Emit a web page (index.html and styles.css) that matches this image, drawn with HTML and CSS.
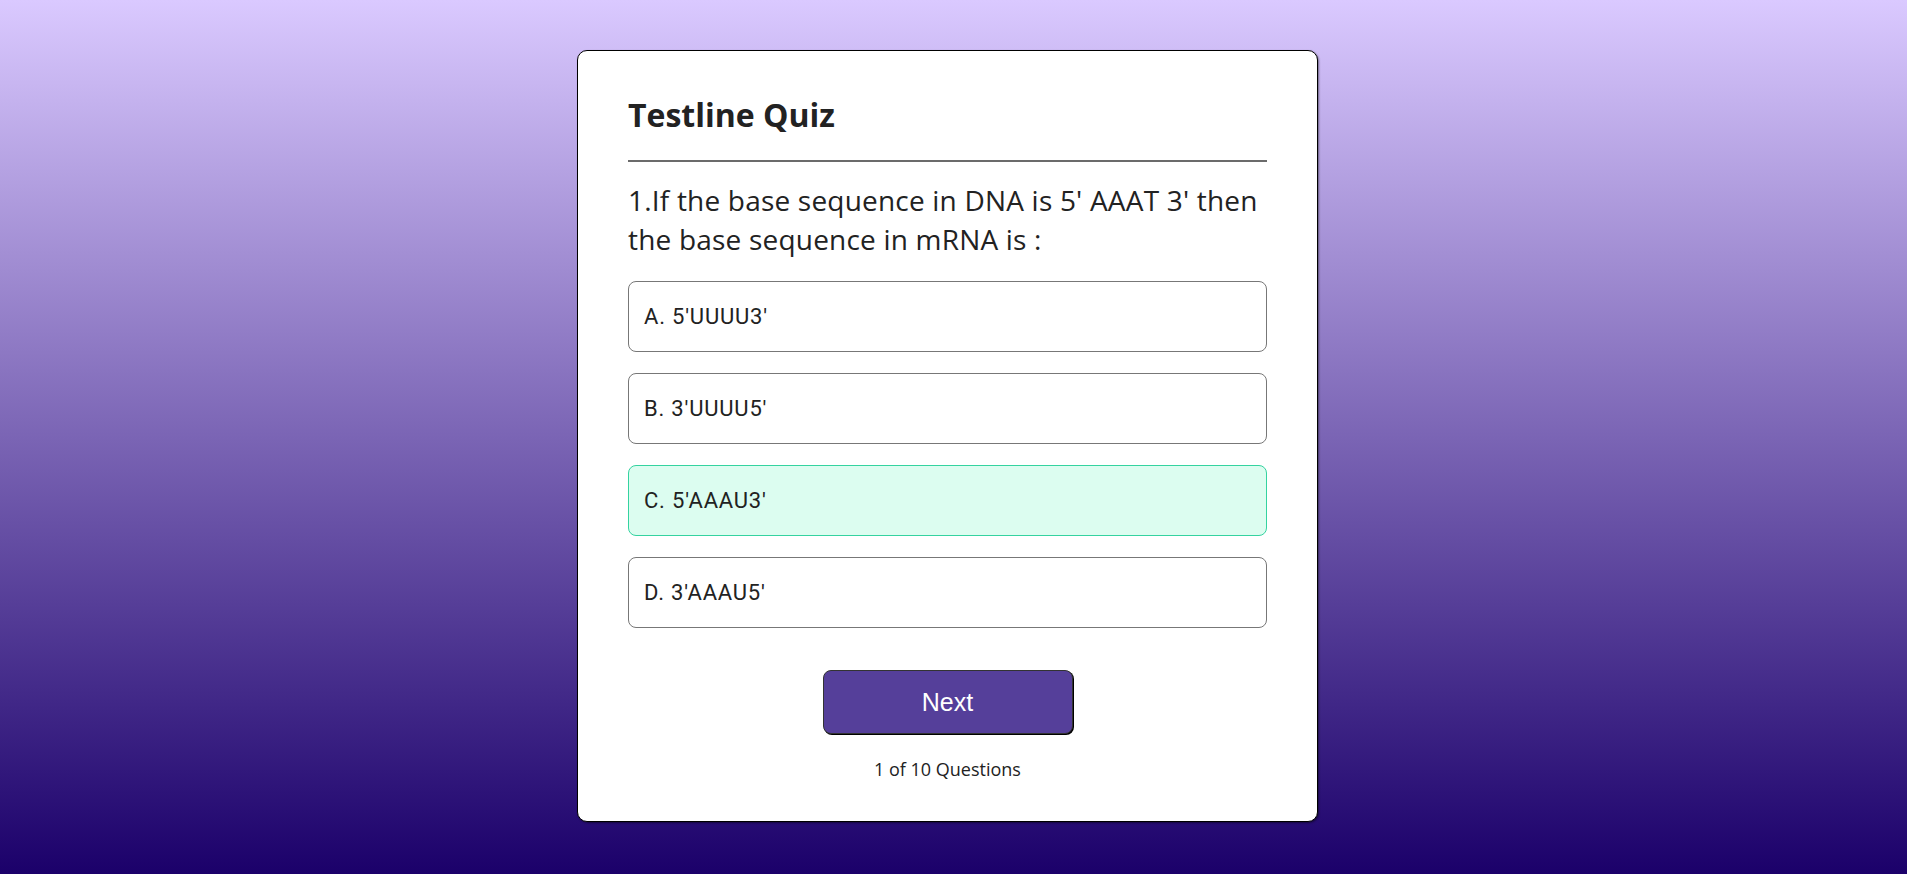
FILE: index.html
```html
<!DOCTYPE html>
<html lang="en">
<head>
<meta charset="utf-8">
<title>Testline Quiz</title>
<link rel="stylesheet" href="styles.css">
</head>
<body>
<main class="page">
  <section class="card">
    <h1 class="title">Testline Quiz</h1>
    <hr class="divider">
    <h2 class="question">1.If the base sequence in DNA is 5' AAAT 3' then the base sequence in mRNA is :</h2>
    <ul class="options">
      <li><button class="option">A. 5'UUUU3'</button></li>
      <li><button class="option">B. 3'UUUU5'</button></li>
      <li><button class="option option--correct">C. 5'AAAU3'</button></li>
      <li><button class="option">D. 3'AAAU5'</button></li>
    </ul>
    <div class="actions">
      <button class="next">Next</button>
    </div>
    <p class="progress">1 of 10 Questions</p>
  </section>
</main>
</body>
</html>
```
FILE: styles.css
```css
* { box-sizing: border-box; }
html, body { margin: 0; padding: 0; }
body {
  min-height: 100vh;
  background: linear-gradient(180deg, #dac9ff 0%, #1b006a 100%);
  font-family: "Open Sans", sans-serif;
  color: #222;
}
.page {
  display: flex;
  justify-content: center;
  padding: 50px 12px 0 0;
  min-height: 872px;
}
.card {
  width: 741px;
  height: 772px;
  background: #fff;
  border: 1px solid #000;
  border-radius: 10px;
  box-shadow: 1px 1px 2px rgba(0,0,0,0.45);
  padding: 40px 50px 0;
  display: flex;
  flex-direction: column;
}
.title {
  margin: 0;
  font-size: 32px;
  line-height: 48px;
  font-weight: 700;
  color: #222;
}
.divider {
  margin: 21px 0 0;
  border: 0;
  height: 2px;
  background: #6b6b6b;
}
.question {
  margin: 19px 0 0;
  font-size: 28px;
  line-height: 39px;
  letter-spacing: 0.2px;
  font-weight: 500;
  color: #222;
}
.options {
  list-style: none;
  margin: 22px 0 0;
  padding: 0;
  display: flex;
  flex-direction: column;
  gap: 21px;
}
.option {
  display: flex;
  align-items: center;
  width: 100%;
  height: 71px;
  padding: 0 15px;
  background: #fff;
  border: 1px solid #777;
  border-radius: 8px;
  font-family: "Roboto", sans-serif;
  font-size: 22px;
  letter-spacing: 0.8px;
  color: #222;
  text-align: left;
}
.option--correct {
  background: #dcfdf0;
  border-color: #34d3a0;
}
.actions {
  display: flex;
  justify-content: center;
  margin-top: 42px;
}
.next {
  width: 250px;
  height: 64px;
  background: #553f9a;
  color: #fff;
  border: 1px solid #333;
  border-radius: 8px;
  box-shadow: 1px 1px 0 #000;
  font-family: "Liberation Sans", Arial, sans-serif;
  font-size: 25px;
}
.progress {
  margin: 23px 0 0;
  text-align: center;
  font-size: 18px;
  line-height: 24px;
  color: #222;
}
```
